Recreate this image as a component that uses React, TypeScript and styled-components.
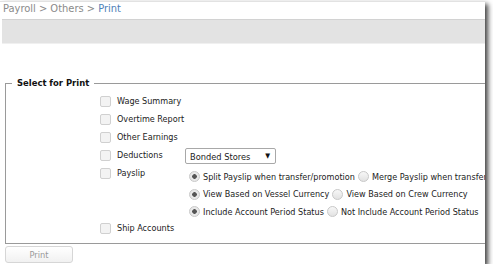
import styled, { createGlobalStyle } from 'styled-components';

const GlobalStyle = createGlobalStyle`
  html, body {
    margin: 0;
    padding: 0;
    background: #fff;
  }
  body {
    font-family: "DejaVu Sans Condensed", "Liberation Sans", sans-serif;
  }
`;

const checkRows = [
  { label: 'Wage Summary' },
  { label: 'Overtime Report' },
  { label: 'Other Earnings' },
];

const radioRows = [
  ['Split Payslip when transfer/promotion', 'Merge Payslip when transfer/promotion'],
  ['View Based on Vessel Currency', 'View Based on Crew Currency'],
  ['Include Account Period Status', 'Not Include Account Period Status'],
];

export default function App() {
  return (
    <>
      <GlobalStyle />
      <Window>
        <Breadcrumb>
          Payroll &gt; Others &gt; <Current>Print</Current>
        </Breadcrumb>
        <ToolBand />
        <Form>
          <Legend>Select for Print</Legend>
          <Options>
            {checkRows.map((row) => (
              <Row key={row.label}>
                <CheckCell>
                  <Check />
                  <Label>{row.label}</Label>
                </CheckCell>
              </Row>
            ))}
            <Row>
              <CheckCell>
                <Check />
                <Label>Deductions</Label>
              </CheckCell>
              <Select>
                <span>Bonded Stores</span>
                <Arrow>▼</Arrow>
              </Select>
            </Row>
            <PayslipRow>
              <CheckCell>
                <Check />
                <Label>Payslip</Label>
              </CheckCell>
              <RadioGroup>
                {radioRows.map((pair) => (
                  <RadioLine key={pair[0]}>
                    <Radio $checked />
                    <Label>{pair[0]}</Label>
                    <Radio />
                    <Label>{pair[1]}</Label>
                  </RadioLine>
                ))}
              </RadioGroup>
            </PayslipRow>
            <Row>
              <CheckCell>
                <Check />
                <Label>Ship Accounts</Label>
              </CheckCell>
            </Row>
          </Options>
        </Form>
        <PrintButton>Print</PrintButton>
      </Window>
    </>
  );
}

const Window = styled.div`
  width: 485px;
  height: 263px;
  margin-top: 1px;
  border-top: 1px solid #e2e2e2;
  background: #fff;
  overflow: hidden;
  box-shadow: 3px 3px 5px rgba(0, 0, 0, 0.75);
  box-sizing: border-box;
`;

const Breadcrumb = styled.div`
  height: 17px;
  padding-left: 3px;
  font-size: 11px;
  line-height: 14px;
  color: #8a8a8a;
  white-space: nowrap;
`;

const Current = styled.span`
  color: #4f7fb8;
`;

const ToolBand = styled.div`
  height: 23px;
  margin-left: 2px;
  background: #e3e3e3;
  border-top: 1px solid #d2d2d2;
  border-bottom: 1px solid #f0f0f0;
`;

const Form = styled.div`
  margin: 39px 0 0 5px;
  width: 520px;
  height: 161px;
  border: 1px solid #9a9a9a;
  border-right: none;
  position: relative;
  box-sizing: border-box;
`;

const Legend = styled.div`
  position: absolute;
  top: -8px;
  left: 6px;
  padding: 0 5px;
  background: #fff;
  font-weight: bold;
  font-size: 9.4px;
  line-height: 14px;
  color: #111;
`;

const Options = styled.div`
  display: flex;
  flex-direction: column;
  padding: 8px 0 0 94px;
`;

const Row = styled.div`
  display: flex;
  align-items: center;
  height: 18px;
`;

const PayslipRow = styled.div`
  display: flex;
  align-items: flex-start;
  height: 55px;
`;

const CheckCell = styled.div`
  display: flex;
  align-items: center;
  flex: none;
  width: 85px;
  height: 18px;
`;

const Check = styled.span`
  width: 9px;
  height: 9px;
  border: 1px solid #d0d0d0;
  border-radius: 2px;
  background: #f3f3f3;
  margin-right: 6px;
  flex: none;
`;

const Label = styled.span`
  font-size: 9px;
  color: #222;
  white-space: nowrap;
  margin-right: 3px;
`;

const Select = styled.div`
  width: 91px;
  height: 16px;
  box-sizing: border-box;
  border: 1px solid #a8a8a8;
  border-radius: 2px;
  display: flex;
  align-items: center;
  justify-content: space-between;
  padding: 0 5px 0 4px;
  font-size: 9.2px;
  color: #222;
  margin-top: 2px;
`;

const Arrow = styled.span`
  font-size: 7px;
  color: #111;
`;

const RadioGroup = styled.div`
  display: flex;
  flex-direction: column;
  padding-top: 4px;
  margin-left: 4px;
`;

const RadioLine = styled.div`
  display: flex;
  align-items: center;
  height: 17.5px;
`;

const Radio = styled.span<{ $checked?: boolean }>`
  width: 9px;
  height: 9px;
  border-radius: 50%;
  border: 1px solid #c8c8c8;
  background: ${(p) => (p.$checked ? 'radial-gradient(circle, #555 0 2px, #e8e8e8 2.6px)' : 'linear-gradient(#f7f7f7, #e2e2e2)')};
  margin-right: 3px;
  flex: none;
`;

const PrintButton = styled.div`
  margin: 2px 0 0 5px;
  width: 68px;
  height: 17px;
  box-sizing: border-box;
  border: 1px solid #d6d6d6;
  border-radius: 3px;
  background: linear-gradient(#ffffff, #f1f1f1);
  color: #9a9a9a;
  font-size: 9.2px;
  display: flex;
  align-items: center;
  justify-content: center;
`;
